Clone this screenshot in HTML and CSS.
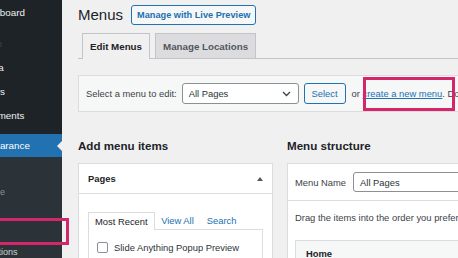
FILE: index.html
```html
<!DOCTYPE html>
<html lang="en">
<head>
<meta charset="utf-8">
<title>Menus</title>
<link rel="stylesheet" href="styles.css">
</head>
<body>
<div class="layout">
  <nav class="sidebar">
    <ul class="menu">
      <li class="menu-item"><span class="menu-label">Dashboard</span></li>
      <li class="sep"></li>
      <li class="menu-item faint"><span class="menu-label">Video</span></li>
      <li class="menu-item"><span class="menu-label">Media</span></li>
      <li class="menu-item"><span class="menu-label">Pages</span></li>
      <li class="menu-item"><span class="menu-label">Comments</span></li>
      <li class="sep"></li>
      <li class="menu-item current"><span class="menu-label">Appearance</span></li>
    </ul>
    <ul class="submenu">
      <li class="sub-item"><span class="sub-label">Themes</span></li>
      <li class="sub-item dim"><span class="sub-label">Customize</span></li>
      <li class="sub-item"><span class="sub-label">Widgets</span></li>
      <li class="sub-item active"><span class="sub-label">Menus</span></li>
      <li class="sub-item"><span class="sub-label">Color Options</span></li>
    </ul>
  </nav>

  <main class="main">
    <div class="title-row">
      <h1 class="title">Menus</h1>
      <span class="btn-outline">Manage with Live Preview</span>
    </div>

    <div class="tabs">
      <span class="tab tab-active">Edit Menus</span>
      <span class="tab">Manage Locations</span>
    </div>

    <div class="manage-box">
      <span class="manage-label">Select a menu to edit:</span>
      <span class="select">
        <span>All Pages</span>
        <svg class="chev" width="9" height="6" viewBox="0 0 9 6"><path d="M1 1l3.5 3.5L8 1" fill="none" stroke="#3c434a" stroke-width="1.3"/></svg>
      </span>
      <span class="btn">Select</span>
      <span class="manage-or">or <a class="link" href="#">create a new menu</a>. Don't forget to save your changes!</span>
    </div>

    <div class="columns">
      <section class="col-left">
        <h2 class="col-title">Add menu items</h2>
        <div class="box">
          <div class="box-head">
            <span class="box-head-title">Pages</span>
            <span class="caret-up"></span>
          </div>
          <div class="box-body">
            <div class="itabs">
              <span class="itab itab-active">Most Recent</span>
              <a class="itab-link" href="#">View All</a>
              <a class="itab-link" href="#">Search</a>
            </div>
            <div class="panel">
              <label class="check-row"><span class="checkbox"></span><span>Slide Anything Popup Preview</span></label>
            </div>
          </div>
        </div>
      </section>

      <section class="col-right">
        <h2 class="col-title">Menu structure</h2>
        <div class="box">
          <div class="ms-head">
            <span class="ms-label">Menu Name</span>
            <span class="input">All Pages</span>
          </div>
          <div class="ms-body">
            <p class="ms-hint">Drag the items into the order you prefer. Click the arrow on the right of the item to reveal additional configuration options.</p>
            <div class="menu-entry">Home</div>
          </div>
        </div>
      </section>
    </div>
  </main>
</div>

<div class="hl hl-side"></div>
<div class="hl hl-link"></div>
</body>
</html>
```

FILE: styles.css
```css
* { box-sizing: border-box; }

html, body {
  margin: 0;
  width: 458px;
  height: 258px;
  overflow: hidden;
}

body {
  position: relative;
  background: #f0f0f1;
  font-family: "Liberation Sans", Arial, sans-serif;
  font-size: 9.4px;
  color: #3c434a;
}

.layout {
  display: flex;
  height: 258px;
}

/* Sidebar */
.sidebar {
  width: 62px;
  flex: none;
  display: flex;
  flex-direction: column;
  background: #1d2327;
  overflow: hidden;
  color: #f0f0f1;
}

.menu, .submenu {
  list-style: none;
  margin: 0;
  padding: 0;
}

.menu-item {
  height: 24px;
  display: flex;
  align-items: center;
  white-space: nowrap;
  font-size: 9.8px;
}

.menu-label { margin-left: -23px; }

.menu-item.faint { color: #3c434a; }

.sep { height: 7px; }

.menu-item.current {
  position: relative;
  height: 23px;
  background: #2271b1;
  color: #fff;
}

.menu-item.current::after {
  content: "";
  position: absolute;
  right: 0;
  top: 50%;
  margin-top: -5px;
  border: 5px solid transparent;
  border-right-color: #f0f0f1;
  border-left-width: 0;
}

.submenu {
  flex: 1;
  background: #2c3338;
  padding-top: 5px;
}

.sub-item {
  height: 20px;
  display: flex;
  align-items: center;
  white-space: nowrap;
  font-size: 9.1px;
  color: rgba(240, 246, 252, 0.8);
}

.sub-item.dim { color: #8c8f94; }
.sub-item.active { color: #fff; font-weight: bold; }

.sub-label { margin-left: -38px; }

/* Main */
.main {
  flex: 1;
  min-width: 0;
  overflow: hidden;
  padding: 5px 0 0 16px;
}

.title-row {
  display: flex;
  align-items: center;
  gap: 8px;
  height: 20px;
}

.title {
  margin: 0;
  font-size: 15px;
  font-weight: 400;
  line-height: 20px;
  color: #1d2327;
}

.btn-outline {
  height: 20px;
  display: flex;
  align-items: center;
  padding: 0 5px;
  border: 1px solid #2271b1;
  border-radius: 3px;
  background: #f6f7f7;
  color: #2271b1;
  font-weight: bold;
  font-size: 9.2px;
  white-space: nowrap;
}

.tabs {
  display: flex;
  align-items: flex-end;
  gap: 5px;
  margin-top: 8px;
  padding-left: 4px;
  border-bottom: 1px solid #c3c4c7;
}

.tab {
  height: 25px;
  display: flex;
  align-items: center;
  padding: 0 7px;
  border: 1px solid #c3c4c7;
  border-bottom: none;
  background: #dcdcde;
  color: #50575e;
  font-weight: bold;
  font-size: 9.75px;
  white-space: nowrap;
}

.tab-active {
  height: 26px;
  margin-bottom: -1px;
  background: #f0f0f1;
  color: #1d2327;
}

.manage-box {
  display: flex;
  align-items: center;
  gap: 5px;
  width: 520px;
  height: 37px;
  margin-top: 16px;
  padding: 0 7px;
  border: 1px solid #dcdcde;
  background: #f6f7f7;
  white-space: nowrap;
}

.select {
  width: 121px;
  height: 21px;
  display: flex;
  align-items: center;
  justify-content: space-between;
  padding: 0 7px 0 6px;
  border: 1px solid #8c8f94;
  border-radius: 3px;
  background: #fff;
  color: #2c3338;
}

.btn {
  height: 21px;
  display: flex;
  align-items: center;
  padding: 0 7px;
  border: 1px solid #2271b1;
  border-radius: 3px;
  background: #f6f7f7;
  color: #2271b1;
}

.manage-or { margin-left: 1px; }

.link {
  color: #2271b1;
  text-decoration: underline;
}

/* Columns */
.columns {
  display: flex;
  gap: 14px;
  margin-top: 27px;
}

.col-left { width: 195px; flex: none; }
.col-right { width: 320px; flex: none; }

.col-title {
  margin: 0 0 10px;
  font-size: 11.6px;
  line-height: 14px;
  font-weight: bold;
  color: #1d2327;
  white-space: nowrap;
}

.box {
  border: 1px solid #dcdcde;
  background: #fff;
}

.box-head {
  height: 30px;
  display: flex;
  align-items: center;
  justify-content: space-between;
  padding: 0 9px;
  border-bottom: 1px solid #dcdcde;
}

.box-head-title {
  font-weight: bold;
  color: #1d2327;
}

.caret-up {
  width: 0;
  height: 0;
  border-left: 3.5px solid transparent;
  border-right: 3.5px solid transparent;
  border-bottom: 4px solid #50575e;
}

.box-body {
  padding: 18px 9px 0;
  height: 80px;
}

.itabs {
  display: flex;
  align-items: flex-end;
}

.itab {
  height: 18px;
  display: flex;
  align-items: center;
  padding: 0 6px;
  margin-bottom: -1px;
  border: 1px solid #dcdcde;
  border-bottom: none;
  background: #fff;
  color: #1d2327;
  position: relative;
}

.itab-link {
  height: 17px;
  display: flex;
  align-items: center;
  padding: 0 6.5px;
  color: #2271b1;
  text-decoration: none;
}

.panel {
  border: 1px solid #dcdcde;
  padding: 12px 8px;
  height: 60px;
}

.check-row {
  display: flex;
  align-items: center;
  gap: 6px;
  color: #2c3338;
  white-space: nowrap;
}

.checkbox {
  width: 11px;
  height: 11px;
  border: 1px solid #8c8f94;
  border-radius: 2px;
  background: #fff;
}

.ms-head {
  height: 37px;
  display: flex;
  align-items: center;
  gap: 7px;
  padding: 0 7px;
  border-bottom: 1px solid #dcdcde;
}

.ms-label { white-space: nowrap; }

.input {
  width: 200px;
  height: 20px;
  display: flex;
  align-items: center;
  padding: 0 6px;
  border: 1px solid #8c8f94;
  border-radius: 3px;
  background: #fff;
  color: #2c3338;
}

.ms-body {
  padding: 11px 7px 0;
  height: 80px;
}

.ms-hint {
  margin: 0;
  line-height: 12px;
  white-space: nowrap;
}

.menu-entry {
  margin-top: 16px;
  padding: 7px 10px;
  line-height: 12px;
  border: 1px solid #dcdcde;
  background: #f6f7f7;
  font-weight: bold;
  color: #1d2327;
}

/* Annotation highlights */
.hl {
  position: absolute;
  border: 3px solid #d3266b;
}

.hl-side {
  left: -4px;
  top: 218px;
  width: 73px;
  height: 27px;
}

.hl-link {
  left: 363px;
  top: 77px;
  width: 92px;
  height: 34px;
}
```
